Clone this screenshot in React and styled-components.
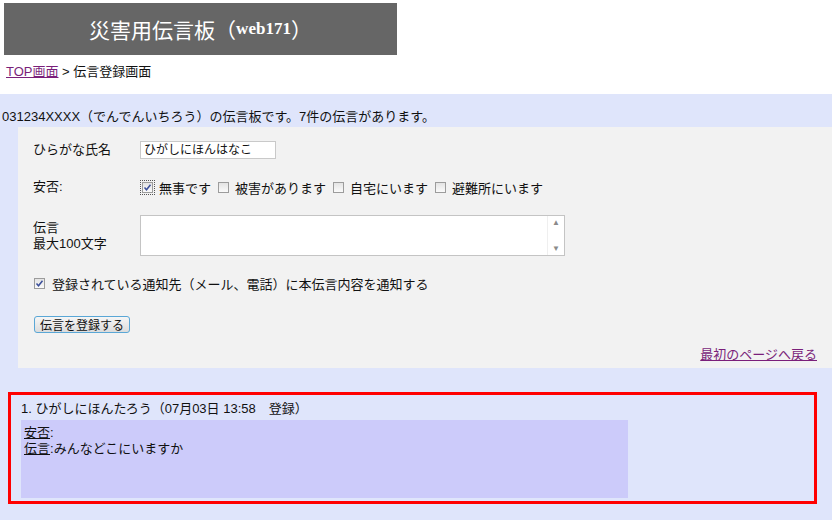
import React from 'react';
import styled, { createGlobalStyle } from 'styled-components';

const GlobalStyle = createGlobalStyle`
  html, body {
    margin: 0;
    padding: 0;
    background: #ffffff;
  }
  body {
    font-family: "Liberation Sans", "Noto Sans CJK JP", sans-serif;
    font-size: 13px;
    color: #111;
  }
`;

const Page = styled.div`
  width: 832px;
  height: 520px;
  overflow: hidden;
  padding-top: 3px;
  box-sizing: border-box;
  display: flex;
  flex-direction: column;
`;

const Header = styled.div`
  margin-left: 4px;
  width: 393px;
  height: 52px;
  background: #666666;
  color: #ffffff;
  display: flex;
  align-items: center;
  justify-content: center;
  font-family: "Noto Sans CJK JP", sans-serif;
  font-size: 21px;
`;

const TitleLatin = styled.span`
  font-family: "Liberation Serif", serif;
  font-weight: bold;
  font-size: 17px;
`;

const Breadcrumb = styled.div`
  margin: 8px 0 0 6px;
  height: 17px;
  line-height: 17px;
`;

const Link = styled.a`
  color: #7a1f7a;
  text-decoration: underline;
  cursor: pointer;
`;

const BoardSection = styled.div`
  margin-top: 14px;
  flex: 1;
  background: #dfe5fb;
  padding-top: 15px;
`;

const Intro = styled.div`
  padding-left: 2px;
  height: 16px;
  line-height: 16px;
  white-space: nowrap;
`;

const FormPanel = styled.div`
  margin: 2px 0 0 18px;
  background: #f2f2f2;
  padding: 14px 15px 5px 15px;
  display: flex;
  flex-direction: column;
`;

const FormRow = styled.div`
  display: grid;
  grid-template-columns: 107px 1fr;
  align-items: ${p => (p.$top ? 'start' : 'center')};
  margin-top: ${p => p.$gap || 0}px;
`;

const Label = styled.div`
  line-height: 16px;
  padding-top: ${p => p.$pad || 0}px;
`;

const TextInput = styled.div`
  width: 136px;
  height: 18px;
  box-sizing: border-box;
  background: #fff;
  border: 1px solid #c9c9c9;
  font-size: 12px;
  line-height: 16px;
  padding-left: 3px;
`;

const Choices = styled.div`
  display: flex;
  align-items: center;
  height: 18px;
  gap: 7px;
  padding-left: 2px;
`;

const Choice = styled.label`
  display: flex;
  align-items: center;
  gap: 6px;
  white-space: nowrap;
`;

const Box = styled.span`
  width: 11px;
  height: 11px;
  box-sizing: border-box;
  border: 1px solid #9c9c9c;
  background: linear-gradient(#e4e4e4, #fafafa);
  display: inline-flex;
  align-items: center;
  justify-content: center;
  outline: ${p => (p.$focus ? '1px dotted #555' : 'none')};
  outline-offset: 1px;
`;

const Check = ({ checked, focus }) => (
  <Box $focus={focus}>
    {checked && (
      <svg width="9" height="9" viewBox="0 0 9 9">
        <path d="M1.5 4.5 L3.5 6.8 L7.5 1.8" fill="none" stroke="#3b4f9a" strokeWidth="1.5" />
      </svg>
    )}
  </Box>
);

const TextAreaBox = styled.div`
  width: 425px;
  height: 41px;
  box-sizing: border-box;
  border: 1px solid #c4c4c4;
  background: #fff;
  display: flex;
`;

const TextArea = styled.div`
  flex: 1;
`;

const ScrollBar = styled.div`
  width: 16px;
  border-left: 1px solid #efefef;
  display: flex;
  flex-direction: column;
  justify-content: space-between;
  align-items: center;
  padding: 2px 0;
  color: #8a8a8a;
  font-size: 8px;
  line-height: 9px;
`;

const NotifyRow = styled.div`
  display: flex;
  align-items: center;
  gap: 7px;
  height: 18px;
  margin-top: 18px;
  padding-left: 1px;
`;

const SubmitButton = styled.button`
  margin-top: 24px;
  align-self: flex-start;
  height: 17px;
  padding: 0 5px;
  margin-left: 1px;
  border: 1px solid #5aa7d6;
  border-radius: 3px;
  background: linear-gradient(#f6f6f6, #dcdcdc);
  font-family: "Noto Sans CJK JP", sans-serif;
  font-size: 12px;
  line-height: 14px;
  color: #111;
  cursor: pointer;
`;

const BackRow = styled.div`
  display: flex;
  justify-content: flex-end;
  height: 16px;
  line-height: 16px;
  margin-top: 14px;
`;

const MessageCard = styled.div`
  margin: 24px 0 0 8px;
  width: 809px;
  box-sizing: border-box;
  border: 3px solid #ff0000;
  padding: 6px 10px 3px 10px;
`;

const MessageTitle = styled.div`
  height: 16px;
  line-height: 16px;
  white-space: nowrap;
`;

const MessageBody = styled.div`
  margin-top: 3px;
  width: 607px;
  height: 78px;
  box-sizing: border-box;
  background: #cccbfa;
  padding: 5px 3px 0 3px;
  line-height: 16px;
`;

const Key = styled.span`
  text-decoration: underline;
`;

export default function App() {
  return (
    <Page>
      <GlobalStyle />
      <Header>
        災害用伝言板（<TitleLatin>web171</TitleLatin>）
      </Header>
      <Breadcrumb>
        <Link>TOP画面</Link> &gt; 伝言登録画面
      </Breadcrumb>
      <BoardSection>
        <Intro>031234XXXX（でんでんいちろう）の伝言板です。7件の伝言があります。</Intro>
        <FormPanel>
          <FormRow>
            <Label>ひらがな氏名</Label>
            <TextInput>ひがしにほんはなこ</TextInput>
          </FormRow>
          <FormRow $gap={19}>
            <Label>安否:</Label>
            <Choices>
              <Choice><Check checked focus />無事です</Choice>
              <Choice><Check />被害があります</Choice>
              <Choice><Check />自宅にいます</Choice>
              <Choice><Check />避難所にいます</Choice>
            </Choices>
          </FormRow>
          <FormRow $gap={19} $top>
            <Label $pad={5}>伝言<br />最大100文字</Label>
            <TextAreaBox>
              <TextArea />
              <ScrollBar>
                <span>▲</span>
                <span>▼</span>
              </ScrollBar>
            </TextAreaBox>
          </FormRow>
          <NotifyRow>
            <Check checked />
            登録されている通知先（メール、電話）に本伝言内容を通知する
          </NotifyRow>
          <SubmitButton>伝言を登録する</SubmitButton>
          <BackRow>
            <Link>最初のページへ戻る</Link>
          </BackRow>
        </FormPanel>
        <MessageCard>
          <MessageTitle>1. ひがしにほんたろう（07月03日 13:58　登録）</MessageTitle>
          <MessageBody>
            <div><Key>安否</Key>:</div>
            <div><Key>伝言</Key>:みんなどこにいますか</div>
          </MessageBody>
        </MessageCard>
      </BoardSection>
    </Page>
  );
}
